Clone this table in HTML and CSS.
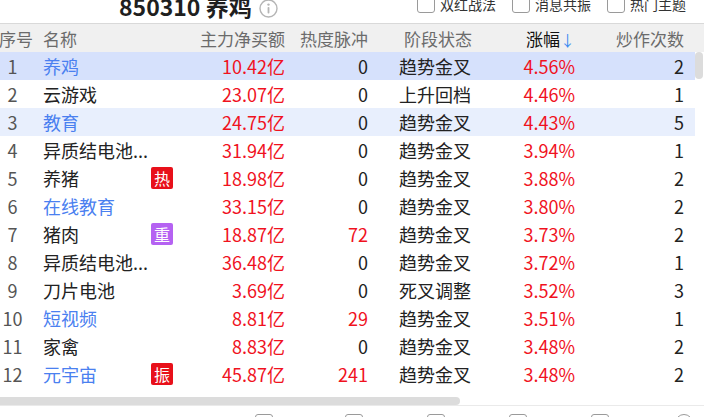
FILE: index.html
```html
<!DOCTYPE html>
<html lang="zh-CN">
<head>
<meta charset="utf-8">
<link rel="stylesheet" href="styles.css">
</head>
<body>
<div class="page">
  <div class="topbar">
    <div class="title">850310 养鸡
      <svg class="info" width="19" height="19" viewBox="0 0 19 19"><circle cx="9.5" cy="9.5" r="8.5" fill="none" stroke="#b5b5b5" stroke-width="1.4"/><circle cx="9.5" cy="5.6" r="1.2" fill="#b5b5b5"/><rect x="8.6" y="8" width="1.8" height="6.5" rx="0.8" fill="#b5b5b5"/></svg>
    </div>
    <div class="checks">
      <label class="chk"><span class="box"></span>双红战法</label>
      <label class="chk"><span class="box"></span>消息共振</label>
      <label class="chk"><span class="box"></span>热门主题</label>
    </div>
  </div>
  <div class="table">
    <div class="row head">
      <div class="c num">序号</div>
      <div class="c name">名称</div>
      <div class="c badge"></div>
      <div class="c amt">主力净买额</div>
      <div class="c heat">热度脉冲</div>
      <div class="c stage hstage">阶段状态</div>
      <div class="c pct sorted">涨幅<span class="arrow">↓</span></div>
      <div class="c cnt">炒作次数</div>
    </div>
    <div class="body">
      <div class="rows">
        <div class="row sel"><div class="c num">1</div><div class="c name link">养鸡</div><div class="c badge"></div><div class="c amt red">10.42亿</div><div class="c heat">0</div><div class="c stage">趋势金叉</div><div class="c pct red">4.56%</div><div class="c cnt">2</div></div>
        <div class="row"><div class="c num">2</div><div class="c name">云游戏</div><div class="c badge"></div><div class="c amt red">23.07亿</div><div class="c heat">0</div><div class="c stage">上升回档</div><div class="c pct red">4.46%</div><div class="c cnt">1</div></div>
        <div class="row hov"><div class="c num">3</div><div class="c name link">教育</div><div class="c badge"></div><div class="c amt red">24.75亿</div><div class="c heat">0</div><div class="c stage">趋势金叉</div><div class="c pct red">4.43%</div><div class="c cnt">5</div></div>
        <div class="row"><div class="c num">4</div><div class="c name">异质结电池...</div><div class="c badge"></div><div class="c amt red">31.94亿</div><div class="c heat">0</div><div class="c stage">趋势金叉</div><div class="c pct red">3.94%</div><div class="c cnt">1</div></div>
        <div class="row"><div class="c num">5</div><div class="c name">养猪</div><div class="c badge"><span class="tag tag-red">热</span></div><div class="c amt red">18.98亿</div><div class="c heat">0</div><div class="c stage">趋势金叉</div><div class="c pct red">3.88%</div><div class="c cnt">2</div></div>
        <div class="row"><div class="c num">6</div><div class="c name link">在线教育</div><div class="c badge"></div><div class="c amt red">33.15亿</div><div class="c heat">0</div><div class="c stage">趋势金叉</div><div class="c pct red">3.80%</div><div class="c cnt">2</div></div>
        <div class="row"><div class="c num">7</div><div class="c name">猪肉</div><div class="c badge"><span class="tag tag-purple">重</span></div><div class="c amt red">18.87亿</div><div class="c heat red">72</div><div class="c stage">趋势金叉</div><div class="c pct red">3.73%</div><div class="c cnt">2</div></div>
        <div class="row"><div class="c num">8</div><div class="c name">异质结电池...</div><div class="c badge"></div><div class="c amt red">36.48亿</div><div class="c heat">0</div><div class="c stage">趋势金叉</div><div class="c pct red">3.72%</div><div class="c cnt">1</div></div>
        <div class="row"><div class="c num">9</div><div class="c name">刀片电池</div><div class="c badge"></div><div class="c amt red">3.69亿</div><div class="c heat">0</div><div class="c stage">死叉调整</div><div class="c pct red">3.52%</div><div class="c cnt">3</div></div>
        <div class="row"><div class="c num">10</div><div class="c name link">短视频</div><div class="c badge"></div><div class="c amt red">8.81亿</div><div class="c heat red">29</div><div class="c stage">趋势金叉</div><div class="c pct red">3.51%</div><div class="c cnt">1</div></div>
        <div class="row"><div class="c num">11</div><div class="c name">家禽</div><div class="c badge"></div><div class="c amt red">8.83亿</div><div class="c heat">0</div><div class="c stage">趋势金叉</div><div class="c pct red">3.48%</div><div class="c cnt">2</div></div>
        <div class="row"><div class="c num">12</div><div class="c name link">元宇宙</div><div class="c badge"><span class="tag tag-red">振</span></div><div class="c amt red">45.87亿</div><div class="c heat red">241</div><div class="c stage">趋势金叉</div><div class="c pct red">3.48%</div><div class="c cnt">2</div></div>
      </div>
      <div class="vscroll"><div class="vthumb"></div></div>
    </div>
    <div class="hscroll"><div class="hthumb"></div></div>
  </div>
  <div class="footer">
    <span class="fbox first"></span><span class="fbox"></span><span class="fbox"></span><span class="fbox"></span><span class="fbox"></span><span class="fbox round"></span>
  </div>
</div>
</body>
</html>
```

FILE: styles.css
```css
* { box-sizing: border-box; }
html, body { margin: 0; padding: 0; background: #fff; }
body {
  font-family: "Noto Sans CJK SC", "Noto Sans", sans-serif;
  color: #222;
  width: 704px;
  height: 417px;
  overflow: hidden;
}
.page { width: 704px; height: 417px; overflow: hidden; display: flex; flex-direction: column; }

.topbar {
  height: 24px;
  flex: none;
  display: flex;
  align-items: flex-start;
  border-bottom: 1px solid #d9d9d9;
  overflow: hidden;
}
.title {
  margin-left: 119px;
  margin-top: -9px;
  font-size: 23px;
  font-weight: 700;
  color: #1f1f1f;
  line-height: 30px;
  display: flex;
  align-items: center;
  gap: 7px;
  white-space: nowrap;
}
.info { margin-top: 4px; }
.checks {
  margin-left: auto;
  margin-top: -6px;
  display: flex;
  gap: 16px;
  padding-right: 18px;
}
.chk {
  display: flex;
  align-items: center;
  gap: 5px;
  font-size: 14px;
  color: #333;
  line-height: 20px;
}
.box {
  width: 18px; height: 18px;
  border: 1px solid #9a9a9a;
  border-radius: 3px;
  background: #fff;
}

.table { flex: none; display: flex; flex-direction: column; }
.row {
  display: grid;
  grid-template-columns: 25px 125px 26px 109px 83px 112px 95px 109px;
  height: 28px;
  align-items: center;
  font-size: 18px;
  white-space: nowrap;
}
.row.head {
  height: 28px;
  background: #f0f0f0;
  color: #6b6b6b;
  font-size: 17px;
  width: 704px;
}
.c { overflow: visible; }
.num { text-align: center; color: #555; }
.head .num { text-align: left; color: #6b6b6b; margin-left: -1px; }
.name { padding-left: 18px; }
.amt, .heat, .pct, .cnt { text-align: right; }
.stage { padding-left: 31px; }
.hstage { padding-left: 36px; }
.sorted { color: #111; }
.arrow { color: #3c8cf0; font-size: 15px; }
.red { color: #f0121e; }
.link { color: #4a80f0; }
.badge { display: flex; align-items: center; }
.tag {
  width: 22px; height: 22px;
  margin-left: 1px;
  border-radius: 2px;
  color: #fff;
  font-size: 16px;
  line-height: 22px;
  text-align: center;
}
.tag-red { background: #e8101a; }
.tag-purple { background: #b562f2; }

.body { display: flex; }
.rows { width: 695px; }
.row.sel { background: #d6e1fc; }
.row.hov { background: #e8effd; }
.vscroll { width: 9px; }
.vthumb {
  width: 8px; height: 27px;
  background: #dcdcdc;
  border-radius: 4px;
}
.hscroll {
  margin-top: 9px;
  height: 9px;
  border-bottom: 1px solid #eaeaea;
  padding-bottom: 1px;
}
.hthumb {
  width: 460px; height: 8px;
  background: #dcdcdc;
  border-radius: 0 4px 4px 0;
}
.footer {
  flex: none;
  height: 10px;
  display: flex;
  padding-top: 8px;
  padding-left: 255px;
  gap: 64px;
}
.fbox {
  width: 18px; height: 18px;
  border: 1px solid #9a9a9a;
  border-radius: 3px;
  flex: none;
}
.fbox.first { margin-right: 8px; }
.fbox.round { border-radius: 50%; margin-left: 2px; }
```
